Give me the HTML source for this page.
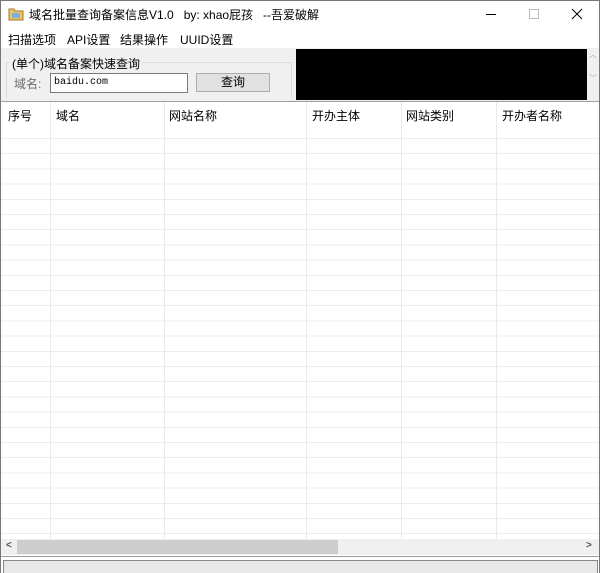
<!DOCTYPE html>
<html><head><meta charset="utf-8"><style>
*{margin:0;padding:0;box-sizing:border-box}
body{width:600px;height:573px;background:#fff;font-family:"Liberation Sans","Noto Sans CJK SC",sans-serif;font-size:12px;color:#000;position:relative;overflow:hidden}
.a{position:absolute}
</style></head><body>
<div class="a" style="left:0;top:0;width:1px;height:573px;background:#777"></div>
<div class="a" style="right:0;top:0;width:1px;height:573px;background:#777"></div>
<div class="a" style="left:0;top:0;width:600px;height:1px;background:#777"></div>
<!-- title -->
<svg class="a" style="left:8px;top:7px" width="16" height="14" viewBox="0 0 16 14"><path d="M1 2h5l1 2h8v9H1z" fill="#e8c46a" stroke="#a07a2a"/><rect x="4" y="6" width="8" height="5" fill="#7fb0d8"/></svg>
<div class="a" style="left:29px;top:6px;font-size:12px">域名批量查询备案信息V1.0&nbsp;&nbsp;&nbsp;by: xhao屁孩&nbsp;&nbsp;&nbsp;--吾爱破解</div>
<div class="a" style="left:486px;top:14px;width:10px;height:1px;background:#000"></div>
<div class="a" style="left:529px;top:9px;width:10px;height:10px;border:1px solid #bbb"></div>
<svg class="a" style="left:571px;top:8px" width="12" height="12"><path d="M1 1L11 11M11 1L1 11" stroke="#000" stroke-width="1"/></svg>
<!-- menu -->
<div class="a" style="left:8px;top:31px;font-size:12px;word-spacing:0">扫描选项</div>
<div class="a" style="left:67px;top:31px">API设置</div>
<div class="a" style="left:120px;top:31px">结果操作</div>
<div class="a" style="left:180px;top:31px">UUID设置</div>
<!-- panel -->
<div class="a" style="left:1px;top:48px;width:598px;height:53px;background:#f0f0f0"></div>
<div class="a" style="left:6px;top:62px;width:286px;height:36px;border:1px solid #dcdcdc;border-bottom:none"></div>
<div class="a" style="left:10px;top:55px;background:#f0f0f0;padding:0 2px">(单个)域名备案快速查询</div>
<div class="a" style="left:14px;top:75px;color:#6d6d6d">域名:</div>
<div class="a" style="left:50px;top:73px;width:138px;height:20px;border:1px solid #7a7a7a;background:#fff;font-family:'Liberation Mono',monospace;font-size:10px;padding:3px 3px">baidu.com</div>
<div class="a" style="left:196px;top:73px;width:74px;height:19px;border:1px solid #adadad;background:#e1e1e1;text-align:center;line-height:17px">查询</div>
<div class="a" style="left:296px;top:49px;width:291px;height:51px;background:#000"></div>
<div class="a" style="left:587px;top:49px;width:12px;height:51px;background:#f0f0f0;color:#aaa;font-size:8px;text-align:center;line-height:12px">︿<br><br>﹀</div>
<!-- table -->
<div class="a" style="left:1px;top:101px;width:598px;height:1px;background:#a0a0a0"></div>
<div class="a" style="left:1px;top:138px;width:598px;height:401px;background:repeating-linear-gradient(to bottom,#ededed 0,#ededed 1px,transparent 1px,transparent 15.2px)"></div>
<div class="a" style="left:50px;top:102px;width:1px;height:437px;background:#eaeaea"></div>
<div class="a" style="left:164px;top:102px;width:1px;height:437px;background:#eaeaea"></div>
<div class="a" style="left:306px;top:102px;width:1px;height:437px;background:#eaeaea"></div>
<div class="a" style="left:401px;top:102px;width:1px;height:437px;background:#eaeaea"></div>
<div class="a" style="left:496px;top:102px;width:1px;height:437px;background:#eaeaea"></div>
<div class="a" style="left:8px;top:107px">序号</div>
<div class="a" style="left:56px;top:107px">域名</div>
<div class="a" style="left:169px;top:107px">网站名称</div>
<div class="a" style="left:312px;top:107px">开办主体</div>
<div class="a" style="left:406px;top:107px">网站类别</div>
<div class="a" style="left:502px;top:107px">开办者名称</div>
<!-- hscroll -->
<div class="a" style="left:1px;top:539px;width:598px;height:16px;background:#f0f0f0"></div>
<div class="a" style="left:17px;top:540px;width:321px;height:14px;background:#cdcdcd"></div>
<div class="a" style="left:6px;top:540px;font-size:10px;color:#555;font-weight:bold">&lt;</div>
<div class="a" style="left:586px;top:540px;font-size:10px;color:#555;font-weight:bold">&gt;</div>
<div class="a" style="left:1px;top:556px;width:598px;height:1px;background:#999"></div>
<div class="a" style="left:3px;top:560px;width:595px;height:13px;background:#e8e8e8;border:1px solid #888;border-bottom:none"></div>
</body></html>
